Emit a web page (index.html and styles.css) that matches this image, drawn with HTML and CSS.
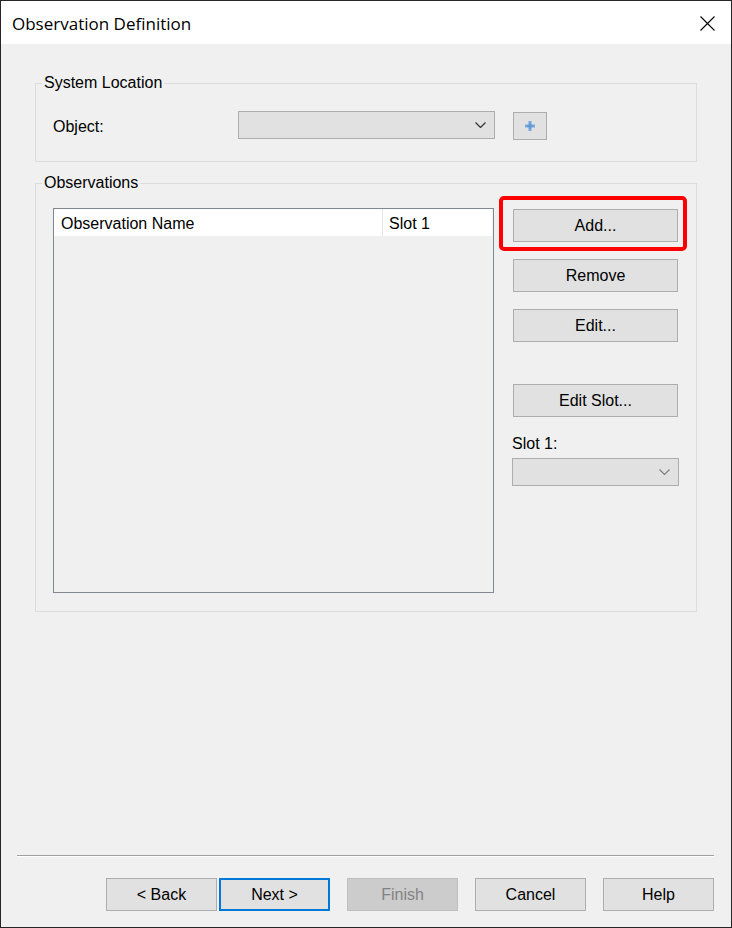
FILE: index.html
```html
<!DOCTYPE html>
<html>
<head>
<meta charset="utf-8">
<title>Observation Definition</title>
<link rel="stylesheet" href="styles.css">
</head>
<body>
<div class="window">
  <div class="titlebar">
    <span class="title">Observation Definition</span>
    <svg class="close" width="15" height="15" viewBox="0 0 15 15"><path d="M0.5 0.5L14.5 14.5M14.5 0.5L0.5 14.5" stroke="#000" stroke-width="1.1" fill="none"/></svg>
  </div>
  <div class="main">
    <fieldset class="group group-loc">
      <legend>System Location</legend>
      <div class="object-row">
        <span class="obj-label">Object:</span>
        <div class="combo combo-object">
          <svg width="11" height="6" viewBox="0 0 11 6"><path d="M0.5 0.5L5.5 5.5L10.5 0.5" fill="none" stroke="#333" stroke-width="1.2"/></svg>
        </div>
        <div class="plus-btn">
          <svg width="10" height="10" viewBox="0 0 10 10"><path d="M5 0V10M0 5H10" stroke="#7aa8df" stroke-width="3"/><path d="M5 2V8M2 5H8" stroke="#5d93d4" stroke-width="1.4"/></svg>
        </div>
      </div>
    </fieldset>
    <fieldset class="group group-obs">
      <legend>Observations</legend>
      <div class="obs-row">
        <div class="listview">
          <div class="lv-header">
            <div class="col col-name">Observation Name</div>
            <div class="col col-slot">Slot 1</div>
          </div>
        </div>
        <div class="side">
          <div class="hl"><div class="btn side-btn">Add...</div></div>
          <div class="btn side-btn btn-remove">Remove</div>
          <div class="btn side-btn btn-edit">Edit...</div>
          <div class="btn side-btn btn-editslot">Edit Slot...</div>
          <div class="slot-label">Slot 1:</div>
          <div class="combo combo-slot">
            <svg width="11" height="6" viewBox="0 0 11 6"><path d="M0.5 0.5L5.5 5.5L10.5 0.5" fill="none" stroke="#7a7a7a" stroke-width="1.1"/></svg>
          </div>
        </div>
      </div>
    </fieldset>
  </div>
  <div class="footer">
    <div class="sep"></div>
    <div class="buttons">
      <div class="pair">
        <div class="btn fbtn">&lt; Back</div>
        <div class="btn fbtn btn-default">Next &gt;</div>
      </div>
      <div class="btn fbtn btn-disabled">Finish</div>
      <div class="btn fbtn">Cancel</div>
      <div class="btn fbtn">Help</div>
    </div>
  </div>
</div>
</body>
</html>
```
FILE: styles.css
```css
* { box-sizing: border-box; }
html, body { margin: 0; padding: 0; }
body {
  background: #fff;
  font-family: "Liberation Sans", Arial, sans-serif;
  font-size: 16px;
  color: #000;
}
.window {
  width: 732px;
  height: 928px;
  border: 1px solid #262626;
  background: #f0f0f0;
  display: flex;
  flex-direction: column;
}
.titlebar {
  flex: none;
  height: 43px;
  background: #fff;
  display: flex;
  align-items: center;
  justify-content: space-between;
  padding: 1px 16px 0 11px;
}
.title {
  font-family: "Open Sans", "Noto Sans", sans-serif;
  font-size: 17px;
  line-height: 23px;
  color: #000;
}
.close { display: block; margin-top: 0; }
.main {
  flex: 1;
  padding: 0 34px;
}
.group {
  margin: 0;
  min-width: 0;
  border: 1px solid #dcdcdc;
}
.group legend {
  padding: 0 2px;
  margin-left: -11px;
  line-height: 18px;
  font-size: 16px;
}
.group-loc {
  margin-top: 30px;
  padding: 18px 17px 21px 17px;
}
.group-obs {
  margin-top: 12px;
  padding: 16px 17px 18px 17px;
}
.object-row {
  display: flex;
  align-items: center;
}
.obj-label { width: 185px; padding-top: 3px; }
.combo {
  height: 28px;
  border: 1px solid #adadad;
  background: #e1e1e1;
  display: flex;
  align-items: center;
  justify-content: flex-end;
  padding-right: 8px;
}
.combo svg { display: block; }
.combo-object { width: 257px; }
.plus-btn {
  width: 34px;
  height: 28px;
  margin-left: 18px;
  margin-top: 2px;
  border: 1px solid #adadad;
  background: #e1e1e1;
  display: flex;
  align-items: center;
  justify-content: center;
}
.plus-btn svg { display: block; }
.obs-row {
  display: flex;
  gap: 18px;
}
.listview {
  width: 441px;
  height: 385px;
  border: 1px solid #828790;
  background: #f0f0f0;
}
.lv-header {
  display: flex;
  height: 27px;
  background: #fff;
  margin-right: 1px;
}
.col { line-height: 25px; padding-top: 2px; white-space: nowrap; }
.col-name {
  width: 329px;
  padding-left: 7px;
  border-right: 1px solid #e5e5e5;
}
.col-slot { padding-left: 6px; }
.side {
  width: 167px;
  display: flex;
  flex-direction: column;
}
.btn {
  height: 33px;
  border: 1px solid #adadad;
  background: #e1e1e1;
  display: flex;
  align-items: center;
  justify-content: center;
  color: #000;
}
.side-btn {
  width: 165px;
  margin-left: 1px;
}
.hl {
  position: relative;
  margin-top: 1px;
}
.hl::after {
  content: "";
  position: absolute;
  top: -13px;
  left: -13px;
  right: -8px;
  bottom: -9px;
  border: 4px solid #ff0000;
  border-radius: 5px;
}
.btn-remove { margin-top: 17px; }
.btn-edit { margin-top: 17px; }
.btn-editslot { margin-top: 42px; }
.slot-label {
  margin-top: 18px;
  line-height: 18px;
}
.combo-slot {
  width: 167px;
  margin-top: 5px;
}
.footer {
  flex: none;
  padding: 0 17px 16px 16px;
}
.sep {
  height: 2px;
  border-top: 1px solid #a0a0a0;
  border-bottom: 1px solid #ffffff;
}
.buttons {
  margin-top: 21px;
  display: flex;
  justify-content: flex-end;
  gap: 17px;
}
.pair {
  display: flex;
  gap: 2px;
}
.fbtn { width: 111px; }
.btn-default { border: 2px solid #0078d7; }
.btn-disabled {
  background: #cccccc;
  border-color: #bfbfbf;
  color: #838383;
}
```
